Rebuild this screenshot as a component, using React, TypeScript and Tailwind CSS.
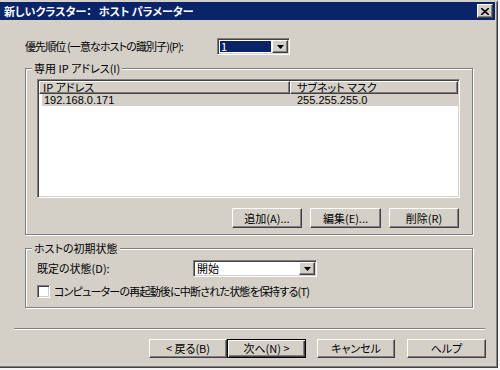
import React from 'react';

const raised =
  'border border-t-white border-l-white border-r-[#404040] border-b-[#404040] shadow-[inset_-1px_-1px_0_#808080]';
const sunken =
  'border border-t-[#808080] border-l-[#808080] border-r-white border-b-white shadow-[inset_1px_1px_0_#404040,inset_-1px_-1px_0_#d4d0c8]';

function Arrow() {
  return (
    <svg width="7" height="4" viewBox="0 0 7 4">
      <path d="M0 0h7L3.5 4z" fill="black" />
    </svg>
  );
}

function DropButton() {
  return (
    <div className={`w-[16px] h-full flex items-center justify-center bg-[#d4d0c8] ${raised}`}>
      <Arrow />
    </div>
  );
}

function Button({ label, def = false, className = '' }: { label: string; def?: boolean; className?: string }) {
  const frame = def
    ? 'border border-black shadow-[inset_1px_1px_0_white,inset_-1px_-1px_0_#404040,inset_-2px_-2px_0_#808080]'
    : raised;
  return (
    <div className={`flex items-center justify-center bg-[#d4d0c8] ${frame} ${className}`}>
      <span className="leading-none">{label}</span>
    </div>
  );
}

function Group({ label, className = '', children }: { label: string; className?: string; children: React.ReactNode }) {
  return (
    <div className={`relative border border-[#808080] shadow-[inset_1px_1px_0_white,1px_1px_0_white] ${className}`}>
      <span className="absolute left-[6px] -top-[8px] px-[2px] bg-[#d4d0c8] leading-[14px]">{label}</span>
      {children}
    </div>
  );
}

export default function App() {
  return (
    <div className="w-[500px] h-[370px] bg-[#f4f4f4] text-[11px] text-black font-['Noto_Sans_CJK_JP',sans-serif] [font-feature-settings:'palt']">
      <div className="w-[498px] h-[368px] flex flex-col bg-[#d4d0c8] border-t-2 border-t-[#d4d0c8] border-r border-b border-r-[#404040] border-b-[#404040] shadow-[inset_-1px_-1px_0_#808080]">
        {/* title bar */}
        <div className="h-[18px] mr-[2px] flex items-center justify-between bg-[#0a246a] pl-[4px] pr-[2px]">
          <span className="text-white font-bold text-[11px] leading-none">
            新しいクラスター：<span className="ml-[7px]">ホスト パラメーター</span>
          </span>
          <div className={`w-[16px] h-[14px] flex items-center justify-center bg-[#d4d0c8] ${raised}`}>
            <svg width="8" height="7" viewBox="0 0 8 7">
              <path d="M0 0L8 7M8 0L0 7" stroke="black" strokeWidth="1.6" />
            </svg>
          </div>
        </div>

        {/* priority */}
        <div className="mt-[18px] ml-[25px] flex items-center h-[17px]">
          <span className="w-[192px] tracking-[-0.9px]">優先順位 (一意なホストの識別子)(P):</span>
          <div className={`w-[73px] h-[17px] flex bg-white p-[1px] ${sunken}`}>
            <div className="flex-1 flex items-center">
              <div className="ml-[1px] mr-[1px] w-full h-[11px] bg-[#0a246a] text-white flex items-center pl-[1px] leading-none">1</div>
            </div>
            <DropButton />
          </div>
        </div>

        {/* dedicated IP */}
        <Group label="専用 IP アドレス(I)" className="mt-[13px] ml-[25px] w-[448px] h-[167px] pt-[10px] pl-[11px]">
          <div className={`w-[423px] h-[119px] bg-white p-[1px] ${sunken}`}>
            <div className="flex h-[13px]">
              <div className={`w-[251px] bg-[#d4d0c8] pl-[3px] flex items-center leading-none ${raised}`}>
                <span>IP アドレス</span>
              </div>
              <div className={`flex-1 bg-[#d4d0c8] pl-[6px] flex items-center leading-none ${raised}`}>
                <span>サブネット マスク</span>
              </div>
            </div>
            <div className="flex h-[12px] ml-[3px] bg-[#d4d0c8] items-center leading-none font-['Liberation_Sans',sans-serif]">
              <span className="w-[248px] pl-[2px]">192.168.0.171</span>
              <span className="pl-[7px]">255.255.255.0</span>
            </div>
          </div>
          <div className="mt-[10px] w-[423px] flex justify-end gap-[8px] pr-[1px]">
            <Button label="追加(A)..." className="w-[70px] h-[20px]" />
            <Button label="編集(E)..." className="w-[71px] h-[20px]" />
            <Button label="削除(R)" className="w-[70px] h-[20px]" />
          </div>
        </Group>

        {/* initial state */}
        <Group label="ホストの初期状態" className="mt-[13px] ml-[25px] w-[448px] h-[60px] pt-[11px] pl-[11px]">
          <div className="flex items-center h-[17px]">
            <span className="w-[156px]">既定の状態(D):</span>
            <div className={`w-[124px] h-[17px] flex bg-white p-[1px] ${sunken}`}>
              <div className="flex-1 flex items-center pl-[2px] leading-none">開始</div>
              <DropButton />
            </div>
          </div>
          <div className="mt-[8px] flex items-center h-[13px]">
            <div className={`w-[13px] h-[13px] bg-white ${sunken}`} />
            <span className="ml-[4px] leading-none tracking-[-0.8px]">コンピューターの再起動後に中断された状態を保持する(T)</span>
          </div>
        </Group>

        {/* separator */}
        <div className="mt-[20px] ml-[14px] w-[471px] h-[2px] border-t border-t-[#808080] border-b border-b-white" />

        {/* bottom buttons */}
        <div className="mt-[9px] ml-[149px] flex h-[19px]">
          <Button label="< 戻る(B)" className="w-[78px] h-[19px]" />
          <Button label="次へ(N) >" def className="w-[79px] h-[19px]" />
          <Button label="キャンセル" className="ml-[11px] w-[78px] h-[19px]" />
          <Button label="ヘルプ" className="ml-[12px] w-[79px] h-[19px]" />
        </div>
      </div>
    </div>
  );
}
